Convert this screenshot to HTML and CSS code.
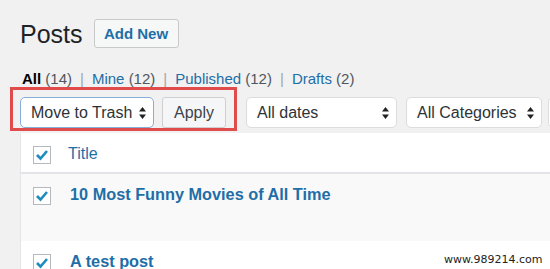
FILE: index.html
```html
<!DOCTYPE html>
<html>
<head>
<meta charset="utf-8">
<link rel="stylesheet" href="styles.css">
</head>
<body>
<div class="wrap">
  <div class="head">
    <h1 class="title">Posts</h1>
    <span class="add-new">Add New</span>
  </div>
  <ul class="subsubsub">
    <li><span class="current">All</span> <span class="count">(14)</span><span class="sep">|</span></li>
    <li><span class="link">Mine</span> <span class="count">(12)</span><span class="sep">|</span></li>
    <li><span class="link">Published</span> <span class="count">(12)</span><span class="sep">|</span></li>
    <li><span class="link">Drafts</span> <span class="count">(2)</span></li>
  </ul>
  <div class="tablenav">
    <div class="highlight"></div>
    <div class="select focus w1"><span>Move to Trash</span><svg class="arrows" width="7" height="12" viewBox="0 0 7 12"><path d="M3.5 0 L7 4.5 L0 4.5 Z M0 7.5 L7 7.5 L3.5 12 Z" fill="#222"/></svg></div>
    <div class="button apply">Apply</div>
    <div class="select w2"><span>All dates</span><svg class="arrows" width="7" height="12" viewBox="0 0 7 12"><path d="M3.5 0 L7 4.5 L0 4.5 Z M0 7.5 L7 7.5 L3.5 12 Z" fill="#222"/></svg></div>
    <div class="select w3"><span>All Categories</span><svg class="arrows" width="7" height="12" viewBox="0 0 7 12"><path d="M3.5 0 L7 4.5 L0 4.5 Z M0 7.5 L7 7.5 L3.5 12 Z" fill="#222"/></svg></div>
    <div class="select w4"></div>
  </div>
  <div class="table">
    <div class="row header">
      <span class="cb"><svg width="14" height="12" viewBox="0 0 14 12"><path d="M2 6 L5.5 9.5 L12 2" fill="none" stroke="#1e8cbe" stroke-width="2.6"/></svg></span>
      <span class="col-title">Title</span>
    </div>
    <div class="row post alt">
      <span class="cb"><svg width="14" height="12" viewBox="0 0 14 12"><path d="M2 6 L5.5 9.5 L12 2" fill="none" stroke="#1e8cbe" stroke-width="2.6"/></svg></span>
      <span class="post-title">10 Most Funny Movies of All Time</span>
    </div>
    <div class="row post">
      <span class="cb"><svg width="14" height="12" viewBox="0 0 14 12"><path d="M2 6 L5.5 9.5 L12 2" fill="none" stroke="#1e8cbe" stroke-width="2.6"/></svg></span>
      <span class="post-title">A test post</span>
    </div>
  </div>
  <div class="watermark">www.989214.com</div>
</div>
</body>
</html>
```

FILE: styles.css
```css
html, body {
  margin: 0;
  padding: 0;
  background: #f1f1f1;
  font-family: "Liberation Sans", Arial, sans-serif;
  color: #23282d;
  overflow: hidden;
  height: 269px;
}
.wrap {
  position: relative;
  padding-left: 20px;
  height: 269px;
  overflow: hidden;
}
.head {
  display: flex;
  align-items: center;
  gap: 11px;
  padding-top: 19px;
  height: 29px;
}
.title {
  margin: 0;
  font-size: 25px;
  font-weight: 400;
  line-height: 29px;
  color: #1d2327;
  padding-top: 1px;
}
.add-new {
  box-sizing: border-box;
  height: 29px;
  width: 85px;
  border: 1px solid #c9c9c9;
  border-radius: 3px;
  background: #f6f7f7;
  color: #1e6ea7;
  font-weight: 700;
  font-size: 15px;
  line-height: 27px;
  text-align: center;
}
.subsubsub {
  list-style: none;
  margin: 0;
  padding: 0 0 0 2px;
  margin-top: 22px;
  display: flex;
  font-size: 15px;
  line-height: 18px;
  color: #555;
}
.subsubsub li {
  white-space: pre;
}
.current { color: #000; font-weight: 700; }
.link { color: #1e6ea7; }
.count { color: #50575e; }
.sep { color: #a0a5aa; margin: 0 8px 0 8px; }
.tablenav {
  position: relative;
  display: flex;
  margin-top: 9px;
  height: 31px;
}
.highlight {
  position: absolute;
  left: -10px;
  top: -10px;
  width: 221px;
  height: 38px;
  border: 3px solid #e04b4b;
}
.select {
  flex: none;
  box-sizing: border-box;
  height: 31px;
  background: #fff;
  border: 1px solid #dcdcde;
  border-radius: 5px;
  display: flex;
  align-items: center;
  justify-content: space-between;
  padding: 0 7px 0 10px;
  font-size: 16px;
  color: #2c3338;
  white-space: nowrap;
}
.select.focus { border-color: #86aedb; }
.w1 { width: 134px; margin-right: 8px; }
.w2 { width: 151px; margin-right: 9px; }
.w3 { width: 136px; margin-right: 6px; }
.w4 { width: 40px; }
.arrows { flex: none; }
.button.apply {
  flex: none;
  box-sizing: border-box;
  width: 64px;
  height: 31px;
  margin-right: 20px;
  border: 1px solid #cfcfcf;
  border-radius: 3px;
  background: #f5f6f7;
  font-size: 16px;
  line-height: 29px;
  text-align: center;
  color: #3c434a;
}
.table {
  margin-top: 5px;
  background: #fff;
  border-left: 1px solid #e5e5e5;
}
.row {
  display: flex;
  align-items: flex-start;
}
.header {
  border-bottom: 2px solid #e2e4e7;
  padding-top: 13px;
  box-sizing: border-box;
  height: 41px;
}
.cb {
  flex: none;
  box-sizing: border-box;
  width: 18px;
  height: 18px;
  margin-left: 12px;
  border: 1px solid #b4b9be;
  background: #fff;
  display: flex;
  align-items: center;
  justify-content: center;
}
.col-title {
  margin-left: 17px;
  font-size: 16px;
  line-height: 18px;
  color: #1e6ea7;
  margin-top: -1px;
}
.post {
  height: 67px;
  padding-top: 13px;
  box-sizing: border-box;
}
.post.alt { background: #f9f9f9; }
.post-title {
  margin-left: 19px;
  font-size: 16.3px;
  font-weight: 700;
  line-height: 19px;
  color: #1e6ea7;
  margin-top: -2px;
  white-space: nowrap;
}
.watermark {
  position: absolute;
  left: 444px;
  top: 253px;
  font-family: "DejaVu Sans", sans-serif;
  font-size: 11px;
  color: #222;
}
```
